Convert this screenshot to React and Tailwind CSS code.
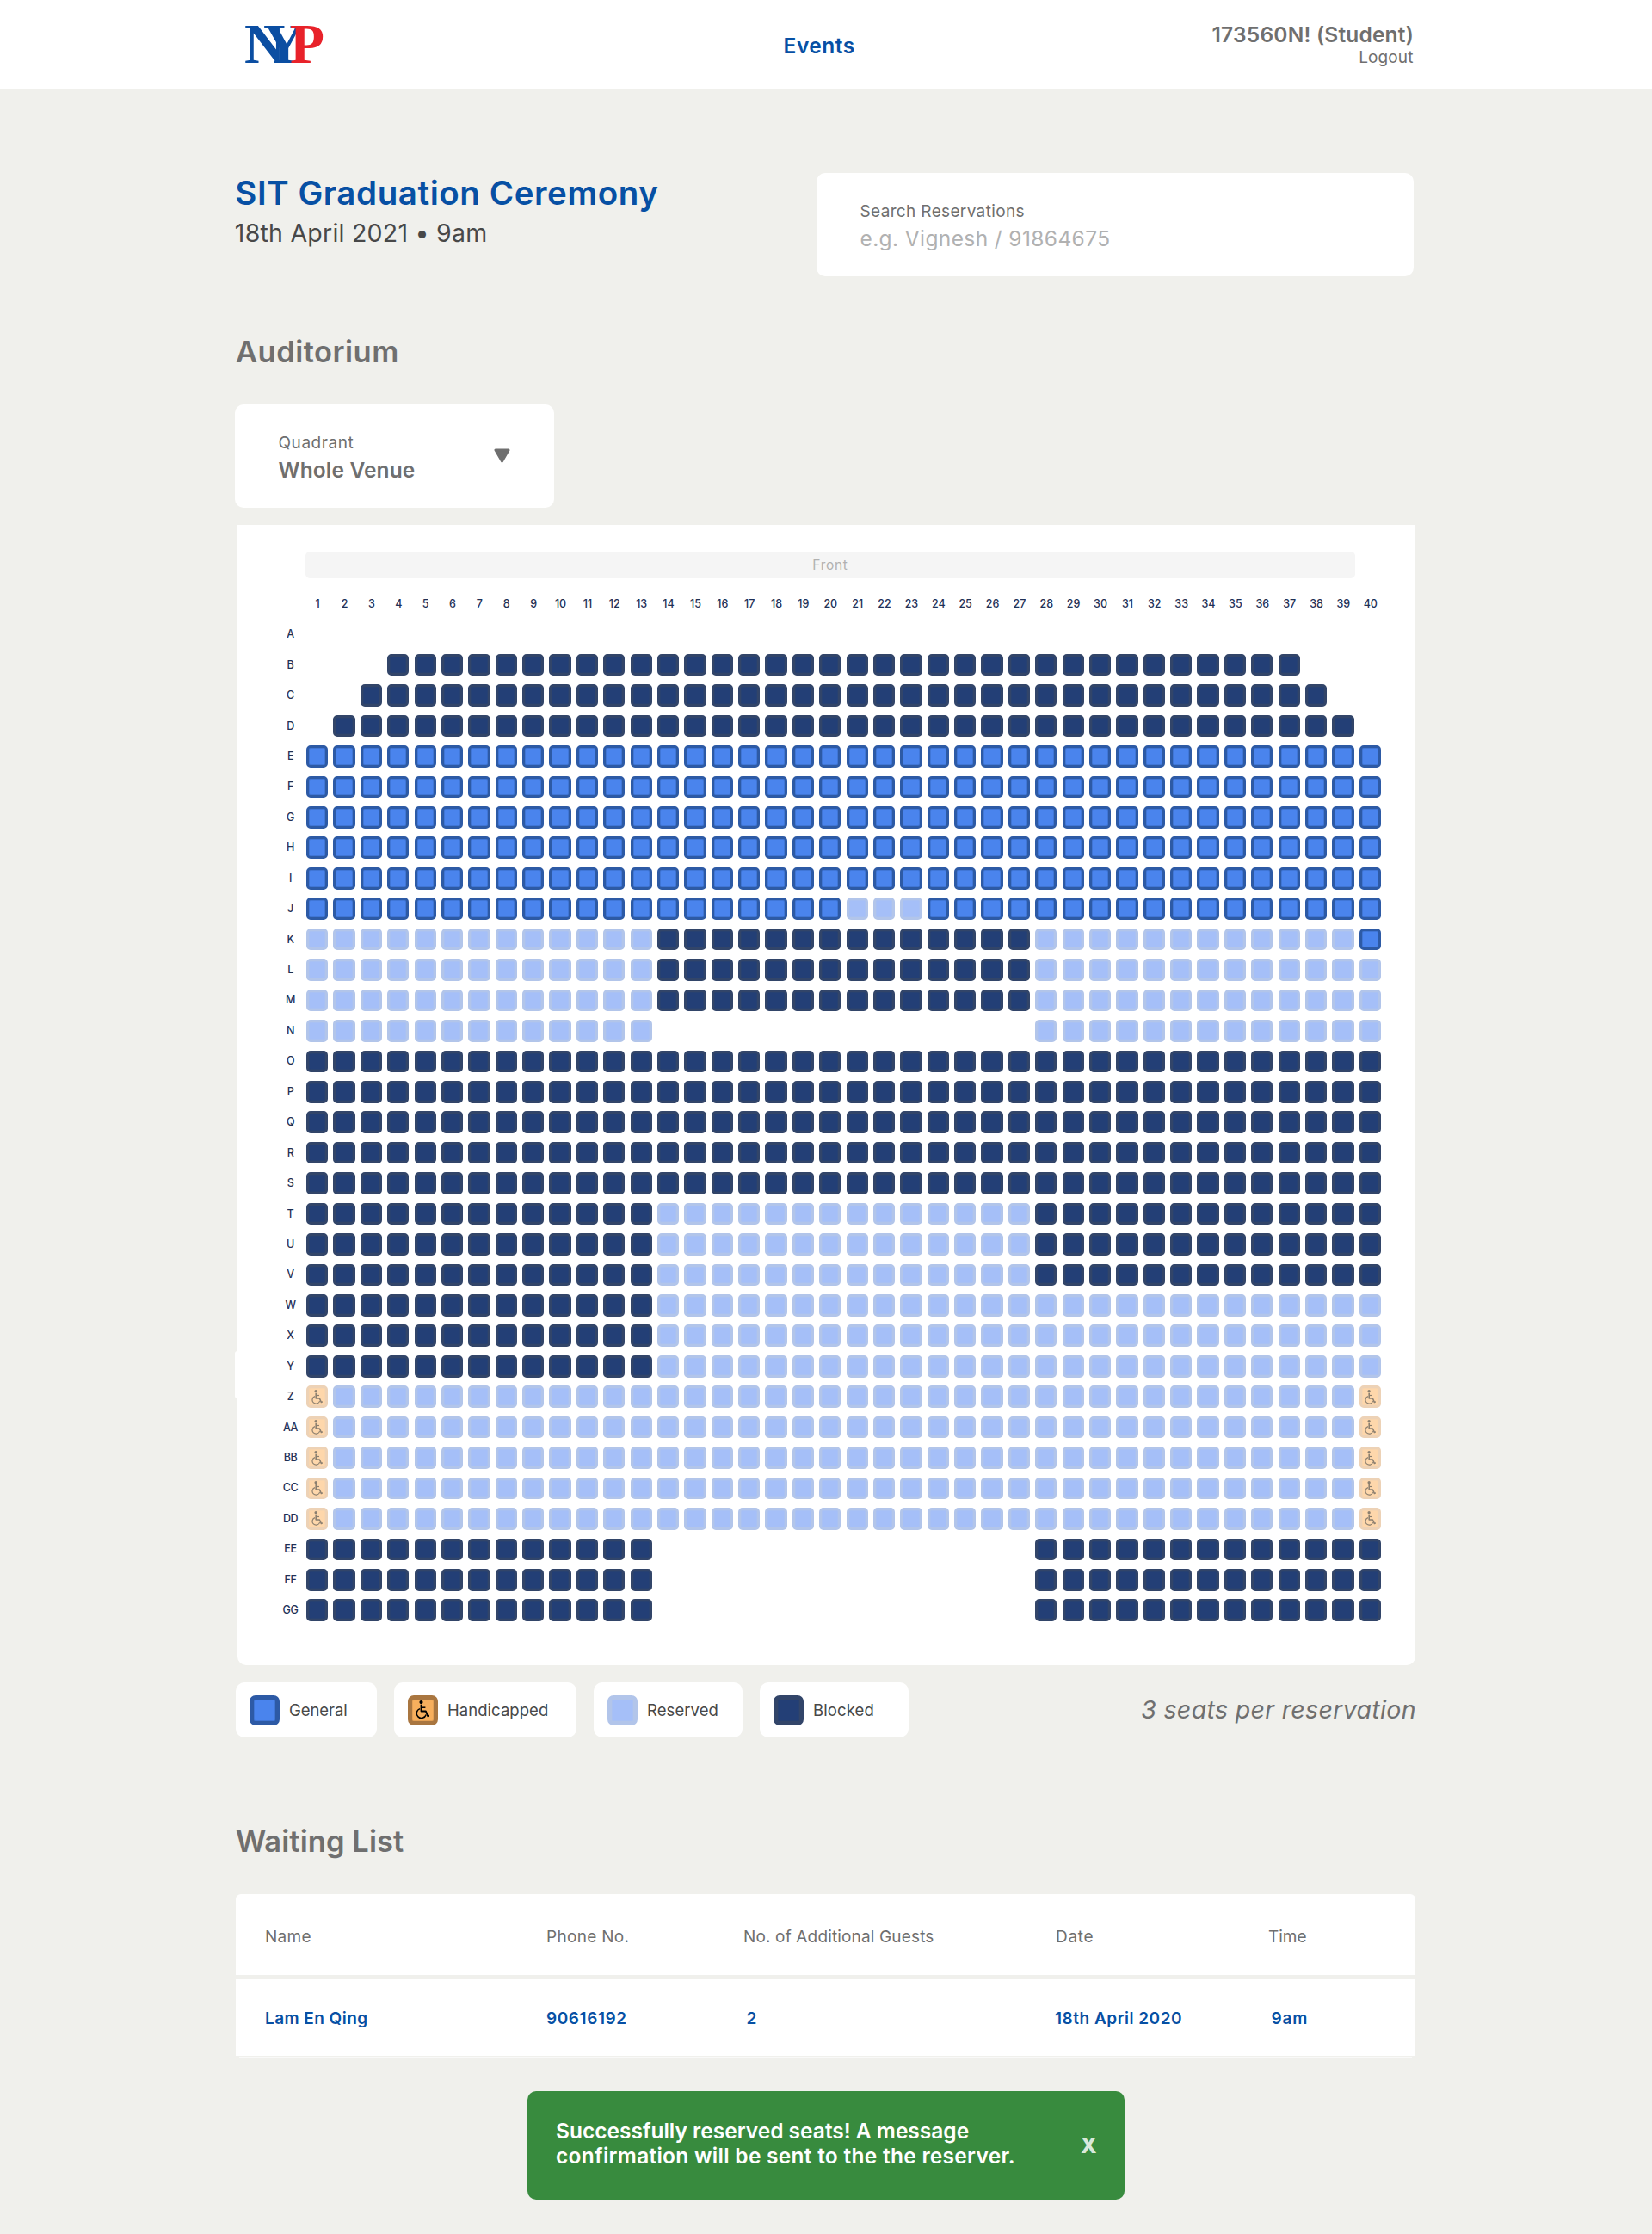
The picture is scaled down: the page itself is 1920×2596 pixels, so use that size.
const ROWS = [
  ["A", [[40, "none"]]],
  ["B", [[3, "none"], [34, "blocked"], [3, "none"]]],
  ["C", [[2, "none"], [36, "blocked"], [2, "none"]]],
  ["D", [[1, "none"], [38, "blocked"], [1, "none"]]],
  ...["E", "F", "G", "H", "I"].map((l) => [l, [[40, "general"]]]),
  ["J", [[20, "general"], [3, "reserved"], [17, "general"]]],
  ["K", [[13, "reserved"], [14, "blocked"], [12, "reserved"], [1, "general"]]],
  ...["L", "M"].map((l) => [l, [[13, "reserved"], [14, "blocked"], [13, "reserved"]]]),
  ["N", [[13, "reserved"], [14, "none"], [13, "reserved"]]],
  ...["O", "P", "Q", "R", "S"].map((l) => [l, [[40, "blocked"]]]),
  ...["T", "U", "V"].map((l) => [l, [[13, "blocked"], [14, "reserved"], [13, "blocked"]]]),
  ...["W", "X", "Y"].map((l) => [l, [[13, "blocked"], [27, "reserved"]]]),
  ...["Z", "AA", "BB", "CC", "DD"].map((l) => [l, [[1, "handicapped"], [38, "reserved"], [1, "handicapped"]]]),
  ...["EE", "FF", "GG"].map((l) => [l, [[13, "blocked"], [14, "none"], [13, "blocked"]]]),
];

const SEAT = {
  none: "invisible",
  general: "border-[#2d5aa5] bg-[#4a84ed] shadow-[inset_0_0_0_1px_#4076d6]",
  reserved: "border-[#b2c5ea] bg-[#a5bff8] shadow-[inset_0_0_0_1px_#a9c1f3]",
  blocked: "border-[#324569] bg-[#233f76] shadow-[inset_0_0_0_1px_#274171]",
  handicapped: "border-[#edd2b6] bg-[#fed7ab] shadow-[inset_0_0_0_1px_#f8d5ae] text-[#8b7f6f]",
  handicappedOpen: "border-[#a97640] bg-[#f7af5d] shadow-[inset_0_0_0_1px_#e5a155] text-black",
};

function Wheelchair({ className }) {
  return (
    <svg viewBox="0 0 16.5 21.5" fill="none" stroke="currentColor" className={className}>
      <circle cx="6.5" cy="2.1" r="2.1" fill="currentColor" stroke="none" />
      <path d="M6.6 4.8V12.6H11.9L14.4 18.3L16.2 17.5" strokeWidth="2" strokeLinejoin="round" />
      <path d="M6.8 8.2H11.4" strokeWidth="1.5" />
      <path d="M5.1 9.6A5.6 5.6 0 1 0 12.2 16.6" strokeWidth="1.5" />
    </svg>
  );
}

function Seat({ kind }) {
  return (
    <div className={"flex h-[25.6px] w-[25.3px] shrink-0 items-center justify-center rounded-[5px] border-[3px] " + SEAT[kind]}>
      {kind === "handicapped" && <Wheelchair className="h-[17px] w-[13px] shrink-0" />}
    </div>
  );
}

function SeatRow({ label, runs }) {
  const seats = runs.flatMap(([n, kind]) => Array(n).fill(kind));
  return (
    <div className="flex h-[35.44px] items-center">
      <span className="mr-[0.5px] w-9 shrink-0 text-center text-[12.5px] font-medium leading-4 tracking-[-0.4px] text-[#1f3157]">{label}</span>
      <div className="flex gap-[6.085px]">
        {seats.map((kind, i) => <Seat key={i} kind={kind} />)}
      </div>
    </div>
  );
}

function Legend({ kind, label, width, tracking }) {
  return (
    <div className={"flex h-16 items-center gap-[11.5px] rounded-[10px] bg-white pl-[15.5px] " + width}>
      <div className={"flex size-[35px] shrink-0 items-center justify-center rounded-[7px] border-[5px] " + SEAT[kind]}>
        {kind === "handicappedOpen" && <Wheelchair className="h-[21.5px] w-[16.5px] shrink-0" />}
      </div>
      <span className={"text-[18.5px] leading-6 text-[#484848] " + tracking}>{label}</span>
    </div>
  );
}

const COLS = "grid grid-cols-[327px_229px_361px_249px_1fr] bg-white pl-[34px] whitespace-nowrap text-[19px] leading-6 ";

export default function App() {
  return (
    <div className="h-[2596px] w-[1920px] overflow-hidden bg-[#f0f0ec] font-['Inter',sans-serif] text-[#6f6f6f]">
      <header className="flex h-[103px] items-start bg-white pl-[284px] pr-[278px]">
        <svg viewBox="0 0 92 44" className="mt-[29px] h-11 w-[92px] overflow-visible font-['Liberation_Serif',serif] font-bold">
          <text x="0 22 53" y="43.5" fontSize="65.5" fill="#0b4ea2">NY<tspan fill="#e8222a">P</tspan></text>
        </svg>
        <nav className="ml-[534.6px] mt-[39px] text-[24.5px] font-semibold leading-7 tracking-[0.5px] text-[#0750a4]">Events</nav>
        <div className="ml-auto flex flex-col items-end pt-[27px]">
          <span className="-mr-px text-[24.5px] font-semibold leading-[27px] tracking-[0.2px]">173560N! (Student)</span>
          <span className="-mr-[0.5px] mt-px text-[19px] leading-6 tracking-[0.12px]">Logout</span>
        </div>
      </header>

      <main className="ml-[274px] w-[1371px] pt-[98px]">
        <section className="flex h-[120px] justify-between pr-[2px]">
          <div>
            <h1 className="-ml-[0.7px] text-[38.5px] font-semibold leading-[46px] tracking-[0.58px] text-[#0750a4]">SIT Graduation Ceremony</h1>
            <p className="-ml-[1.2px] mt-[6.5px] text-[28.5px] leading-[34px] tracking-[0.24px] text-[#484848]">18th April 2021 • 9am</p>
          </div>
          <div className="w-[694px] rounded-[10px] bg-white pl-[50.5px] pt-[33px]">
            <p className="text-[19px] leading-6 tracking-[0.35px]">Search Reservations</p>
            <p className="mt-[5px] text-[24.5px] leading-7 tracking-[0.39px] text-[#b1b1b1]">e.g. Vignesh / 91864675</p>
          </div>
        </section>

        <h2 className="mt-[67px] text-[34.5px] font-semibold leading-[42px] tracking-[0.48px]">Auditorium</h2>
        <div className="-ml-px mt-10 flex h-[120px] w-[371px] rounded-[10px] bg-white pl-[50.5px] pr-[51px] pt-[33px]">
          <div className="flex-1">
            <p className="text-[19px] leading-6 tracking-[0.56px]">Quadrant</p>
            <p className="mt-[5px] text-[24.5px] font-semibold leading-7 tracking-[0.15px]">Whole Venue</p>
          </div>
          <svg viewBox="0 0 19 17" className="mt-[18px] h-[17px] w-[19px]">
            <path d="M2 2H17L9.5 15Z" fill="currentColor" stroke="currentColor" strokeWidth="3" strokeLinejoin="round" />
          </svg>
        </div>

        <section className="relative ml-[1.5px] mt-5 h-[1325px] w-[1369.5px] rounded-b-[10px] bg-white pt-[31px]">
          <div className="absolute -left-[2.5px] top-[960px] h-[55px] w-3 rounded-l-[3px] bg-white" />
          <div className="ml-[79.5px] flex h-[31px] w-[1220px] items-center justify-center rounded-[5px] bg-[#f5f5f5] text-[15.5px] leading-5 tracking-[0.7px] text-[#b1b1b1]">Front</div>
          <div className="ml-[81px] mt-[22px] flex h-4 gap-[6.085px]">
            {Array.from({ length: 40 }, (_, i) => (
              <span key={i} className="w-[25.3px] shrink-0 text-center text-[12.5px] font-medium leading-4 text-[#1f3157]">{i + 1}</span>
            ))}
          </div>
          <div className="ml-11 mt-[9.5px]">
            {ROWS.map(([label, runs]) => <SeatRow key={label} label={label} runs={runs} />)}
          </div>
        </section>

        <div className="mt-5 flex items-center gap-5">
          <Legend kind="general" label="General" width="w-[164px]" tracking="tracking-[-0.06px]" />
          <Legend kind="handicappedOpen" label="Handicapped" width="w-[212px]" tracking="tracking-[0.05px]" />
          <Legend kind="reserved" label="Reserved" width="w-[173px]" tracking="tracking-[0.08px]" />
          <Legend kind="blocked" label="Blocked" width="w-[173px]" tracking="tracking-[0.12px]" />
          <p className="-mr-px ml-auto text-[28.5px] italic leading-9 tracking-[0.35px]">3 seats per reservation</p>
        </div>

        <h2 className="mt-[100px] text-[34.5px] font-semibold leading-[42px] tracking-[0.08px]">Waiting List</h2>
        <div className="mt-10">
          <div className={COLS + "h-[94px] rounded-t-[6px] pt-[37.5px]"}>
            <span className="tracking-[0.29px]">Name</span>
            <span className="tracking-[0.29px]">Phone No.</span>
            <span className="tracking-[0.15px]">No. of Additional Guests</span>
            <span className="ml-0.5 tracking-[0.73px]">Date</span>
            <span>Time</span>
          </div>
          <div className={COLS + "mt-[5px] h-[89px] pt-[33.5px] font-semibold text-[#0750a4]"}>
            <span className="tracking-[0.45px]">Lam En Qing</span>
            <span className="tracking-[0.57px]">90616192</span>
            <span className="ml-[3.5px]">2</span>
            <span className="ml-px tracking-[0.52px]">18th April 2020</span>
            <span className="ml-[3.5px] tracking-[0.9px]">9am</span>
          </div>
          <div className="mx-1 mt-px h-px bg-[#f9f9f8]" />
        </div>

        <div className="ml-[339px] mt-[39px] flex h-[126px] w-[694px] rounded-[10px] bg-[#388b3e] pl-[33px] pt-[32px]">
          <p className="w-[610px] text-[24.5px] font-semibold leading-[29.3px] text-white">
            <span className="block">Successfully reserved seats! A message</span>
            <span className="block tracking-[0.27px]">confirmation will be sent to the the reserver.</span>
          </p>
          <span className="mt-[16.5px] text-[24.5px] font-extrabold leading-7 text-[#d9e9da]">X</span>
        </div>
      </main>
    </div>
  );
}
